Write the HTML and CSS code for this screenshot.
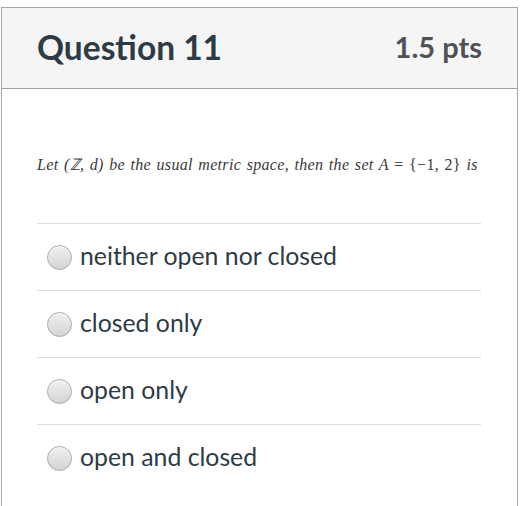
FILE: index.html
```html
<!DOCTYPE html>
<html>
<head>
<meta charset="utf-8">
<link rel="stylesheet" href="styles.css">
</head>
<body>
<div class="card">
  <div class="header">
    <div class="title">Question 11</div>
    <div class="pts">1.5 pts</div>
  </div>
  <div class="body">
    <p class="question">Let (ℤ, <i>d</i>) be the usual metric space, then the set <i>A</i> <span class="up">= {−1, 2}</span> is</p>
    <div class="answers">
      <div class="answer"><span class="radio"></span><span class="label">neither open nor closed</span></div>
      <div class="answer"><span class="radio"></span><span class="label">closed only</span></div>
      <div class="answer"><span class="radio"></span><span class="label">open only</span></div>
      <div class="answer"><span class="radio"></span><span class="label">open and closed</span></div>
    </div>
  </div>
</div>
</body>
</html>
```
FILE: styles.css
```css
html, body {
  margin: 0;
  padding: 0;
  background: #fff;
}
.card {
  margin: 7px 0 0 1px;
  width: 517px;
  box-sizing: border-box;
  border: 1px solid #a8a8a8;
  border-bottom: none;
  height: 499px;
}
.header {
  height: 80px;
  background: #f5f5f5;
  border-bottom: 1px solid #a0a0a0;
  display: flex;
  align-items: center;
  justify-content: space-between;
  padding: 0 35px 0 35px;
}
.title {
  font-family: Lato, sans-serif;
  font-weight: 700;
  font-size: 33.5px;
  color: #2d3b45;
  padding-bottom: 3px;
}
.pts {
  font-family: Lato, sans-serif;
  font-weight: 700;
  font-size: 29px;
  color: #4d5256;
  padding-bottom: 3px;
}
.body {
  padding: 0 36px 0 35px;
}
.question {
  margin: 0;
  height: 134px;
  box-sizing: border-box;
  padding-top: 64px;
  font-family: "Liberation Serif", serif;
  font-style: italic;
  font-size: 16px;
  letter-spacing: 0.32px;
  color: #3a3a3a;
  word-spacing: 1.2px;
  white-space: nowrap;
}
.question .up {
  font-style: normal;
}
.answer {
  height: 66px;
  border-top: 1px solid #dedede;
  display: flex;
  align-items: center;
  gap: 8px;
  padding-left: 10px;
}
.radio {
  width: 23px;
  height: 23px;
  border-radius: 50%;
  border: 1px solid #a9a9a9;
  background: linear-gradient(#f0f0f0, #d4d4d4);
  box-shadow: inset 0 1px 1px rgba(255,255,255,0.8);
  flex: none;
}
.label {
  font-family: Lato, sans-serif;
  font-size: 24.8px;
  color: #2d3b45;
  padding-bottom: 4px;
}
```
